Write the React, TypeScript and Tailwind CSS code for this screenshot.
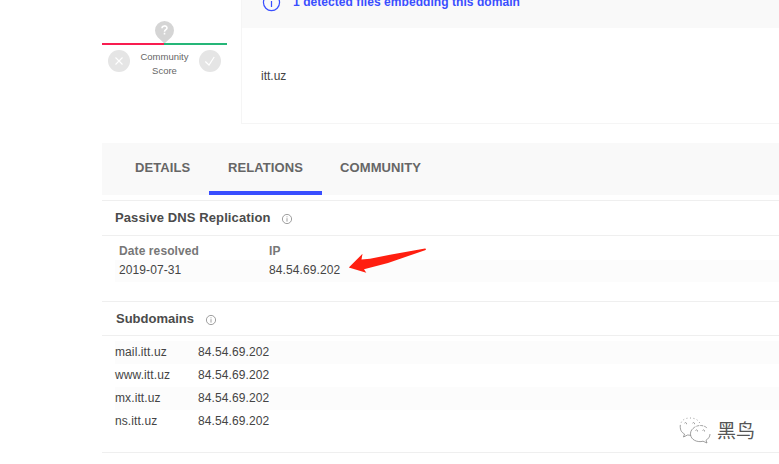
import React from "react";

const subdomains = [
  { name: "mail.itt.uz", ip: "84.54.69.202" },
  { name: "www.itt.uz", ip: "84.54.69.202" },
  { name: "mx.itt.uz", ip: "84.54.69.202" },
  { name: "ns.itt.uz", ip: "84.54.69.202" },
];

function InfoIcon({ className }: { className: string }) {
  return (
    <svg viewBox="0 0 12 12" className={className} fill="none" stroke="currentColor">
      <circle cx="6" cy="6" r="4.6" strokeWidth="0.7" />
      <path d="M6 5.2v3.4M6 3.4v0.9" strokeWidth="0.7" />
    </svg>
  );
}

function CommunityScore() {
  return (
    <div className="mt-5 h-[60px] w-[125px] text-[#666]">
      <div className="flex h-[23px] justify-center">
        <svg viewBox="0 0 20 23" className="h-[23px] w-5">
          <path d="M9.5 23.5L2.7 17.2A9.5 9.5 0 1 1 16.3 17.2Z" fill="#d5d5d5" />
          <path d="M7 8.2C7 5.2 12 5.2 12 8C12 9.8 9.5 9.6 9.5 11.8M9.5 12.8v1.6" fill="none" stroke="#fff" strokeWidth="1.6" />
        </svg>
      </div>
      <div className="flex h-[2px]">
        <div className="w-[62px] bg-[#f81d50]" />
        <div className="flex-1 bg-[#25b678]" />
      </div>
      <div className="flex justify-between px-[6px] pt-[5px]">
        <svg viewBox="0 0 22 22" className="h-[22px] w-[22px]">
          <circle cx="11" cy="11" r="11" fill="#e5e5e5" />
          <path d="M7.5 7.5l7 7M14.5 7.5l-7 7" stroke="#fff" strokeWidth="1.1" />
        </svg>
        <div className="text-center text-[9.5px] leading-[14px]">
          Community
          <br />
          Score
        </div>
        <svg viewBox="0 0 22 22" className="h-[22px] w-[22px]">
          <circle cx="11" cy="11" r="11" fill="#e5e5e5" />
          <path d="M6.3 11.5l3.7 3.5 5.2-8" fill="none" stroke="#fff" strokeWidth="1.2" />
        </svg>
      </div>
    </div>
  );
}

export default function App() {
  return (
    <div className="relative h-[464px] w-[779px] overflow-hidden bg-white pl-[102px] font-['Liberation_Sans',Arial,sans-serif] text-[12px] tracking-[0.1px] text-[#444]">
      <header className="flex h-[124px] tracking-normal">
        <CommunityScore />
        <div className="ml-[14px] flex-1 border-b border-l border-[#f5f5f5]">
          <div className="flex h-7 items-start bg-[#f9f9f9] pl-[19px] text-[#394eff]">
            <InfoIcon className="-mt-[8px] h-[21px] w-[21px]" />
            <span className="-mt-[6px] ml-[11px] text-[12px] leading-4 font-bold tracking-[0.06px]">
              1 detected files embedding this domain
            </span>
          </div>
          <div className="pt-10 pl-[19px] leading-4">itt.uz</div>
        </div>
      </header>

      <nav className="mt-[19px] flex h-[52px] bg-[#f9f9f9] text-[13px] leading-[50px] font-bold text-[#666]">
        <div className="w-[107px] pl-[33px]">DETAILS</div>
        <div className="w-[113px] border-b-4 border-[#394eff] text-center">RELATIONS</div>
        <div className="pl-[18px]">COMMUNITY</div>
      </nav>

      <section className="mt-[5px] h-[101px] border-t border-[#efefef]">
        <h2 className="flex h-[35px] items-center border-b border-[#efefef] pl-[13px] text-[13px] font-bold text-[#4b4b4b]">
          <span className="w-[165.5px]">Passive DNS Replication</span>
          <InfoIcon className="mt-[2px] h-3 w-3 text-[#777]" />
        </h2>
        <div className="flex pt-[6px] pl-[17px] leading-[18px] font-bold text-[#777]">
          <span className="w-[150px]">Date resolved</span>
          <span>IP</span>
        </div>
        <div className="ml-[13px] flex h-[22px] bg-[#fcfcfc] pl-1 leading-[20px]">
          <span className="w-[150px]">2019-07-31</span>
          <span>84.54.69.202</span>
        </div>
      </section>

      <section className="h-[152px] border-y border-[#efefef]">
        <h2 className="flex h-[34px] items-center border-b border-[#efefef] pl-[14px] text-[13px] font-bold tracking-normal text-[#4b4b4b]">
          <span className="w-[88.5px]">Subdomains</span>
          <InfoIcon className="mt-[2px] h-3 w-3 text-[#777]" />
        </h2>
        <div className="mt-[5px] ml-[13px]">
          {subdomains.map((row) => (
            <div key={row.name} className="flex h-[23px] leading-[23px] odd:bg-[#fcfcfc]">
              <span className="w-[83px]">{row.name}</span>
              <span>{row.ip}</span>
            </div>
          ))}
        </div>
      </section>

      <svg className="absolute top-[245px] left-[347px] h-[30px] w-[82px]" viewBox="347 245 82 30">
        <path d="M348.8 267.5L362.5 253.8L361.5 259.5L370 258.8L390 254.8L425 248.6Q427 249.2 425 250.2L388 263L364 269.2L366.3 272.7Z" fill="#ff1f10" />
      </svg>

      <div className="absolute top-[417px] left-[679px] flex items-center">
        <svg viewBox="0 0 32 27" className="h-[27px] w-8" fill="none" stroke="#777" strokeWidth="0.7">
          <path d="M1.2 9C1.2 14 3 15.5 5.5 17L4.5 20L8.5 18L12 18.3" />
          <path d="M1.2 9C2 3 6 1 11 1C16 1 20 3 21.3 7.5" strokeDasharray="1 2.5" />
          <path d="M11.5 17C12 11 16 8.5 21 8.5C27 8.5 31 12 31 17C31 20 29 22 27 23.3L28 26L24 24.2C17 26 12 22.5 11.5 17Z" fill="#fff" stroke="none" />
          <path d="M14 11.5C18 7.5 25 7.5 28.5 11.5" strokeDasharray="3 1" />
          <path d="M14 11.5C10 15 11 21 15.5 23.3C18 24.7 21.5 25 24 24.2L28 26L27 23.3C29 22 31 20 31 17" />
          <path d="M5.5 6.2q1-1.3 2 0M7.5 6.2v1M13.5 6.2q1-1.3 2 0M15.5 6.2v1M16.5 13.5q1-1.3 2 0M18.5 13.5v1M23.5 13.5q1-1.3 2 0M25.5 13.5v1" />
        </svg>
        <span className="-mt-[2px] ml-[6px] font-['Noto_Sans_CJK_SC',sans-serif] text-[19px] leading-[27px] tracking-normal text-[#555]">黑鸟</span>
      </div>
    </div>
  );
}
